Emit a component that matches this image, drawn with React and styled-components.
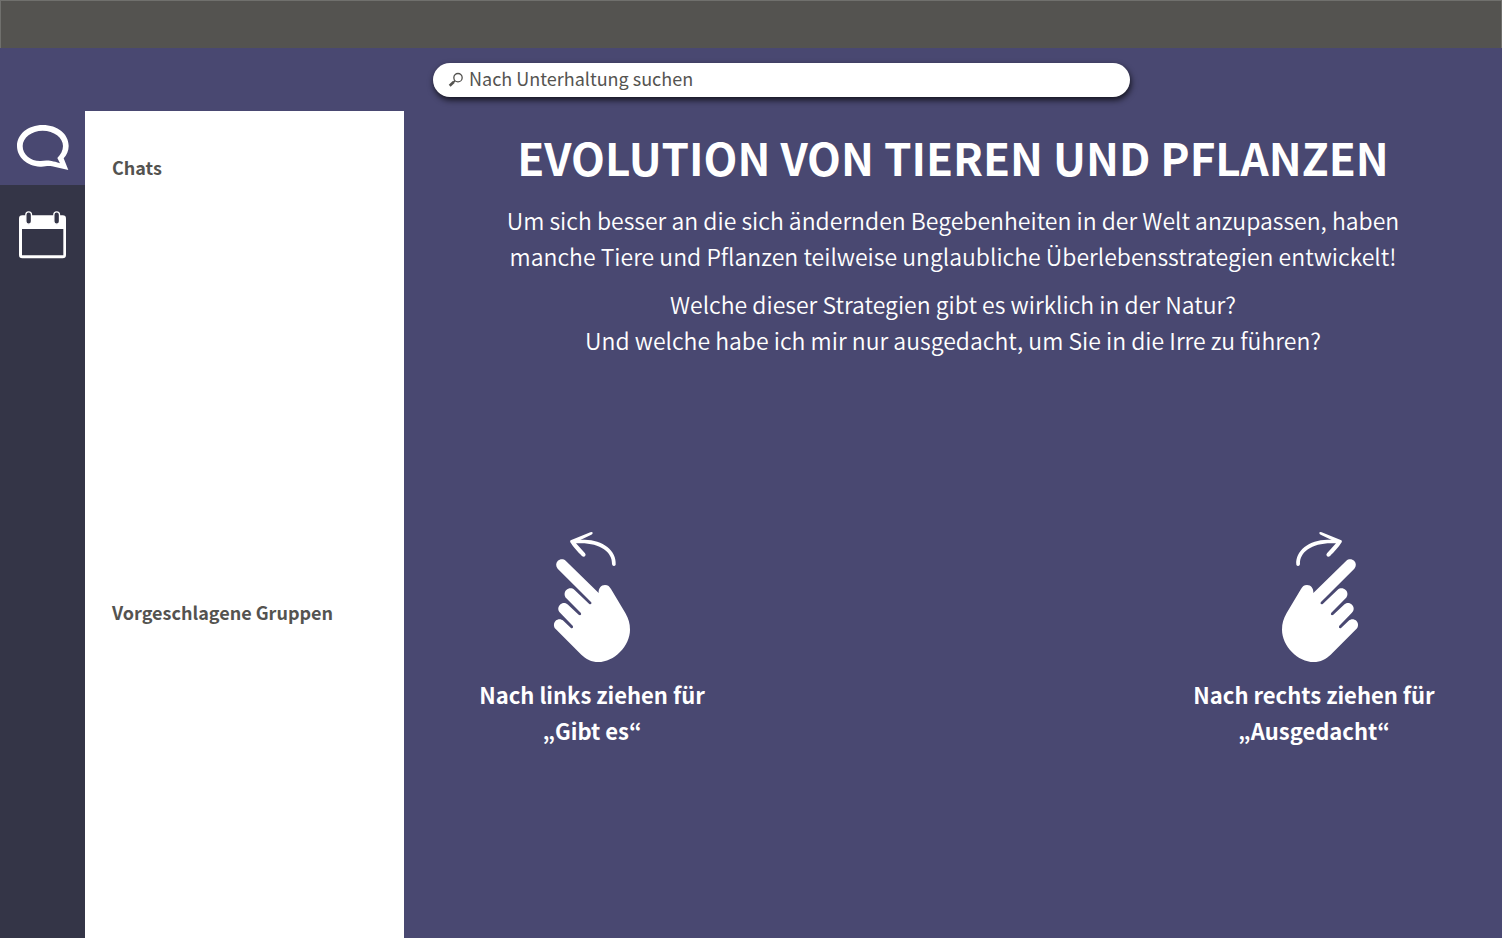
import React from "react";
import styled, { createGlobalStyle } from "styled-components";

const GlobalStyle = createGlobalStyle`
  *, *::before, *::after { box-sizing: border-box; }
  body {
    margin: 0;
    background: #494871;
    font-family: "Source Sans Pro", "Noto Sans CJK KR", "Noto Sans", sans-serif;
  }
  h1, h2, p { margin: 0; }
`;

const Page = styled.div`
  display: flex;
  flex-direction: column;
  min-height: 100vh;
  background: #494871;
`;

const TitleBar = styled.header`
  height: 48px;
  flex: none;
  background: #545350;
  border: 1px solid #70706d;
  border-bottom: 0;
`;

const SearchRow = styled.form`
  display: grid;
  grid-template-columns: 404px 1fr;
  height: 63px;
  flex: none;
  align-items: center;
`;

const SearchBox = styled.label`
  grid-column: 2;
  display: flex;
  align-items: center;
  gap: 6px;
  width: calc(64% - 6px);
  height: 34px;
  margin-left: 29px;
  padding: 0 16px 4px 15px;
  border-radius: 17px;
  background: #fff;
  color: #545350;
  box-shadow: 1px 3px 6px rgba(0, 0, 0, 0.75);

  svg { flex: none; }
`;

const SearchInput = styled.input`
  flex: 1;
  min-width: 0;
  height: 28px;
  padding: 0;
  border: 0;
  outline: 0;
  background: transparent;
  color: inherit;
  font: 400 18px/28px "Source Sans Pro", "Noto Sans CJK KR", sans-serif;

  &::placeholder { color: #545350; opacity: 1; }
`;

const Body = styled.div`
  display: flex;
  flex: 1;
`;

const Rail = styled.nav`
  display: flex;
  flex-direction: column;
  flex: none;
  width: 85px;
  background: #343547;
`;

const RailButton = styled.button`
  display: flex;
  align-items: center;
  justify-content: center;
  height: ${(p) => (p.$active ? 74 : 100)}px;
  padding: 0;
  border: 0;
  background: ${(p) => (p.$active ? "#494871" : "transparent")};
  cursor: pointer;
`;

const Panel = styled.aside`
  display: grid;
  grid-template-rows: 445px 1fr;
  flex: none;
  width: 319px;
  padding: 42px 27px 0;
  background: #fff;
`;

const PanelTitle = styled.h2`
  color: #545350;
  font-size: 18px;
  font-weight: 700;
  line-height: 28px;
`;

const Main = styled.main`
  display: flex;
  flex-direction: column;
  flex: 1;
  min-width: 0;
  padding-top: 16px;
  color: #fff;
  text-align: center;
`;

const Title = styled.h1`
  margin-bottom: 3px;
  font-size: 44px;
  font-weight: 700;
  line-height: 60px;
`;

const Text = styled.p`
  margin-top: 12px;
  font-size: 23px;
  font-weight: 350;
  line-height: 36px;
`;

const Choices = styled.div`
  display: flex;
  justify-content: space-between;
  margin-top: 172px;
  padding: 0 38px;
`;

const Choice = styled.section`
  display: flex;
  flex-direction: column;
  align-items: center;
  width: 300px;
`;

const ChoiceLabel = styled.p`
  margin-top: 12px;
  font-size: 22px;
  font-weight: 700;
  line-height: 36px;
`;

const SearchIcon = () => (
  <svg width="15" height="18" viewBox="0 -6 45 54" aria-hidden="true">
    <circle cx="30" cy="20" r="12.5" fill="none" stroke="currentColor" strokeWidth="4" />
    <path d="M21 29 L16 34" stroke="currentColor" strokeWidth="5" />
    <path d="M17 33 L5 44" stroke="currentColor" strokeWidth="8" />
  </svg>
);

const ChatIcon = () => (
  <svg width="54" height="48" viewBox="48 72 162 144" aria-hidden="true">
    <path
      fill="#fff"
      fillRule="evenodd"
      d="M128 75C173 75 206 102 206 138C206 152 200 165 191 175L205 210L156 199C141 196 136 201 120 200C80 198 51 171 51 138C51 103 84 75 128 75ZM128 92C95 92 68 113 68 138C68 165 93 184 122 183C137 182 145 179 180 190L172 174C182 164 189 152 189 138C189 113 162 92 128 92Z"
    />
  </svg>
);

const CalendarIcon = () => (
  <svg width="47" height="48" viewBox="57 332 141 144" aria-hidden="true">
    <path
      fill="#fff"
      fillRule="evenodd"
      d="M67 345H188Q198 345 198 355V464Q198 474 188 474H67Q57 474 57 464V355Q57 345 67 345ZM66 386V465H190V386Z"
    />
    <rect x="77.500" y="334.500" width="17" height="37" rx="8.500" fill="#343547" stroke="#fff" strokeWidth="4" />
    <rect x="161.500" y="334.500" width="17" height="37" rx="8.500" fill="#343547" stroke="#fff" strokeWidth="4" />
  </svg>
);

const SwipeIcon = ({ right }) => (
  <svg
    width="96"
    height="134"
    viewBox={right ? "18 30 288 402" : "42 30 288 402"}
    aria-hidden="true"
  >
    <g transform={right ? "translate(366 0) scale(-1 1)" : undefined}>
      <path
        fill="#fff"
        d="M107 122L206 219C205 205 213 195 225 195C234 195 239 200 243 207L286 279C296 296 300 311 300 329C300 378 252 426 205 426C184 426 168 417 154 404L77 327C70 320 70 309 77 302C84 296 93 296 100 302L122 323C126 327 132 323 128 317L91 279C83 271 83 261 90 254C97 247 107 247 114 254L146 284C151 288 156 283 152 278L109 235C102 228 102 216 109 210C116 203 126 203 133 209L177 251C182 256 187 250 183 246L83 146C77 139 77 129 83 123C90 116 100 116 107 122Z"
      />
      <path
        fill="#fff"
        d="M122 61L181 37Q188 35 188 39Q188 42 184 44L151 60C211 54 261 90 257 134Q256 138 251 138Q246 137 246 132C248 94 205 65 138 70L165 100Q169 105 165 109Q160 112 155 107C145 98 130 81 121 67Q119 63 122 61Z"
      />
    </g>
  </svg>
);

export default function App() {
  return (
    <>
      <GlobalStyle />
      <Page>
        <TitleBar />
        <SearchRow role="search">
          <SearchBox>
            <SearchIcon />
            <SearchInput
              type="search"
              aria-label="Nach Unterhaltung suchen"
              placeholder="Nach Unterhaltung suchen"
            />
          </SearchBox>
        </SearchRow>
        <Body>
          <Rail>
            <RailButton type="button" $active aria-label="Chats">
              <ChatIcon />
            </RailButton>
            <RailButton type="button" aria-label="Kalender">
              <CalendarIcon />
            </RailButton>
          </Rail>
          <Panel>
            <PanelTitle>Chats</PanelTitle>
            <PanelTitle>Vorgeschlagene Gruppen</PanelTitle>
          </Panel>
          <Main>
            <Title>EVOLUTION VON TIEREN UND PFLANZEN</Title>
            <Text>
              Um sich besser an die sich ändernden Begebenheiten in der Welt anzupassen, haben
              <br />
              manche Tiere und Pflanzen teilweise unglaubliche Überlebensstrategien entwickelt!
            </Text>
            <Text>
              Welche dieser Strategien gibt es wirklich in der Natur?
              <br />
              Und welche habe ich mir nur ausgedacht, um Sie in die Irre zu führen?
            </Text>
            <Choices>
              <Choice>
                <SwipeIcon />
                <ChoiceLabel>
                  Nach links ziehen für
                  <br />
                  „Gibt es“
                </ChoiceLabel>
              </Choice>
              <Choice>
                <SwipeIcon right />
                <ChoiceLabel>
                  Nach rechts ziehen für
                  <br />
                  „Ausgedacht“
                </ChoiceLabel>
              </Choice>
            </Choices>
          </Main>
        </Body>
      </Page>
    </>
  );
}
